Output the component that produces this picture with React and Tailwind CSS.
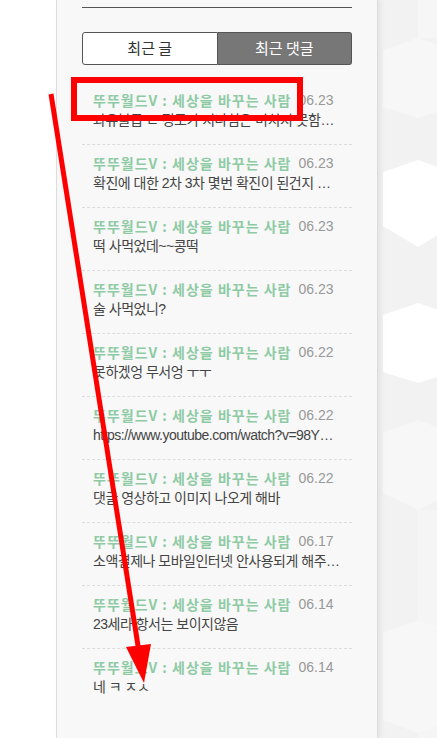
import React from "react";

const comments = [
  { date: "06.23", text: "과유불급 ㄴ 정도가 지나침은 미치지 못함과 같음" },
  { date: "06.23", text: "확진에 대한 2차 3차 몇번 확진이 된건지 궁금하네요" },
  { date: "06.23", text: "떡 사먹었데~~콩떡" },
  { date: "06.23", text: "술 사먹었니?" },
  { date: "06.22", text: "못하겠엉 무서엉 ㅜㅜ" },
  { date: "06.22", text: "https://www.youtube.com/watch?v=98YKJdfs2" },
  { date: "06.22", text: "댓글 영상하고 이미지 나오게 해바" },
  { date: "06.17", text: "소액결제나 모바일인터넷 안사용되게 해주세요" },
  { date: "06.14", text: "23세라 항서는 보이지않음" },
  { date: "06.14", text: "네 ㅋ ㅈㅅ" },
];

const font = { fontFamily: '"Noto Sans CJK KR", "Noto Sans", sans-serif' };
const bodyFont = { fontFamily: '"Liberation Sans", "Noto Sans CJK KR", sans-serif' };

const HexPattern = () => (
  <svg width="59" height="738" viewBox="0 0 59 738" className="block">
    <rect width="59" height="738" fill="#f2f2f2" />
    <rect x="40" y="0" width="19" height="38" fill="#f6f6f6" />
    <polygon points="40,38 75,50 75,107 40,118 5,107 5,50" fill="#f7f7f7" />
    <polygon points="40,160 75,172 75,226 40,247 5,226 5,172" fill="#ffffff" />
    <polygon points="40,303 75,315 75,372 40,383 5,372 5,315" fill="#ffffff" />
    <polygon points="40,420 75,433 75,493 40,510 5,493 5,433" fill="#f7f7f7" />
    <rect x="40" y="510" width="19" height="228" fill="#f5f5f5" />
    <polygon points="40,620 75,633 75,720 40,733 5,720 5,633" fill="#f7f7f7" />
  </svg>
);

const Annotations = () => (
  <svg
    className="pointer-events-none absolute left-0 top-0 z-30"
    width="437"
    height="738"
    viewBox="0 0 437 738"
  >
    <rect x="74" y="80" width="226" height="38" fill="none" stroke="#ff0000" strokeWidth="6" />
    <line x1="51" y1="94" x2="139" y2="652" stroke="#ff0000" strokeWidth="5" />
    <polygon points="126,647 151,644 144,683" fill="#ff0000" />
  </svg>
);

export default function App() {
  return (
    <div className="relative flex h-[738px] w-[437px] overflow-hidden bg-white" style={font}>
      <div className="w-[56px] shrink-0" />

      {/* sidebar panel */}
      <div className="relative z-10 w-[322px] shrink-0 border-l border-r border-[#dddddd] bg-[#f8f8f8] px-[25px] shadow-[3px_0_5px_rgba(0,0,0,0.06)]">
        <div className="mt-[7px] border-t border-[#555555]" />

        <div className="mt-[24px] flex h-[33px] text-[15px]">
          <button className="flex flex-1 items-center justify-center rounded-l-[3px] border border-[#555555] bg-white text-[#333333]">
            최근 글
          </button>
          <button className="flex flex-1 items-center justify-center rounded-r-[3px] border border-l-0 border-[#555555] bg-[#777777] text-white">
            최근 댓글
          </button>
        </div>

        <ul className="mt-[17px]">
          {comments.map((c, i) => (
            <li
              key={i}
              className={`px-[11px] pt-[9px] pb-[14px] ${i > 0 ? "border-t border-dashed border-[#dddddd]" : ""}`}
            >
              <div className="flex h-[18px] items-center gap-[7px] whitespace-nowrap">
                <span className="text-[14px] font-bold tracking-[1px] text-[#8ecba5]">
                  뚜뚜월드V : 세상을 바꾸는 사람
                </span>
                <span className="text-[14px] text-[#999999]" style={{ fontFamily: '"Liberation Sans", sans-serif' }}>
                  {c.date}
                </span>
              </div>
              <div
                className="mt-[1px] h-[20px] w-[248px] truncate text-[14px] leading-[20px] tracking-[-0.5px] text-[#444444]"
                style={bodyFont}
              >
                {c.text}
              </div>
            </li>
          ))}
        </ul>
      </div>

      {/* hexagon backdrop */}
      <div className="flex-1">
        <HexPattern />
      </div>

      <Annotations />
    </div>
  );
}
